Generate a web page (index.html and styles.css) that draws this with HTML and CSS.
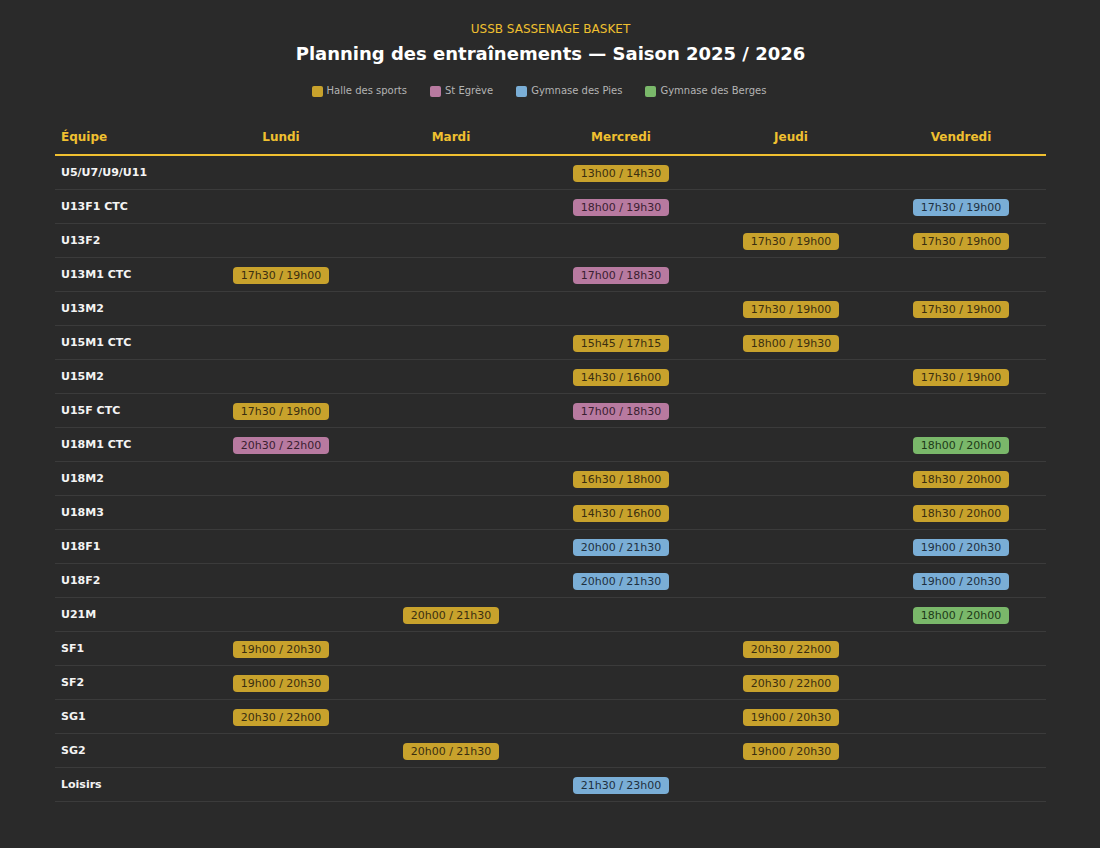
FILE: index.html
```html
<!DOCTYPE html>
<html lang="fr">
<head>
<meta charset="utf-8">
<title>Planning</title>
<link rel="stylesheet" href="styles.css">
</head>
<body>
<div class="page">
  <header class="head">
    <div class="club">USSB SASSENAGE BASKET</div>
    <h1 class="title">Planning des entraînements — Saison 2025 / 2026</h1>
    <div class="legend">
      <span class="leg"><i class="sw gold"></i>Halle des sports</span>
      <span class="leg"><i class="sw pink"></i>St Egrève</span>
      <span class="leg"><i class="sw blue"></i>Gymnase des Pies</span>
      <span class="leg"><i class="sw green"></i>Gymnase des Berges</span>
    </div>
  </header>
  <table class="grid">
    <thead>
      <tr><th class="team">Équipe</th><th>Lundi</th><th>Mardi</th><th>Mercredi</th><th>Jeudi</th><th>Vendredi</th></tr>
    </thead>
    <tbody>
      <tr><td class="team">U5/U7/U9/U11</td><td></td><td></td><td><span class="b gold">13h00 / 14h30</span></td><td></td><td></td></tr>
      <tr><td class="team">U13F1 CTC</td><td></td><td></td><td><span class="b pink">18h00 / 19h30</span></td><td></td><td><span class="b blue">17h30 / 19h00</span></td></tr>
      <tr><td class="team">U13F2</td><td></td><td></td><td></td><td><span class="b gold">17h30 / 19h00</span></td><td><span class="b gold">17h30 / 19h00</span></td></tr>
      <tr><td class="team">U13M1 CTC</td><td><span class="b gold">17h30 / 19h00</span></td><td></td><td><span class="b pink">17h00 / 18h30</span></td><td></td><td></td></tr>
      <tr><td class="team">U13M2</td><td></td><td></td><td></td><td><span class="b gold">17h30 / 19h00</span></td><td><span class="b gold">17h30 / 19h00</span></td></tr>
      <tr><td class="team">U15M1 CTC</td><td></td><td></td><td><span class="b gold">15h45 / 17h15</span></td><td><span class="b gold">18h00 / 19h30</span></td><td></td></tr>
      <tr><td class="team">U15M2</td><td></td><td></td><td><span class="b gold">14h30 / 16h00</span></td><td></td><td><span class="b gold">17h30 / 19h00</span></td></tr>
      <tr><td class="team">U15F CTC</td><td><span class="b gold">17h30 / 19h00</span></td><td></td><td><span class="b pink">17h00 / 18h30</span></td><td></td><td></td></tr>
      <tr><td class="team">U18M1 CTC</td><td><span class="b pink">20h30 / 22h00</span></td><td></td><td></td><td></td><td><span class="b green">18h00 / 20h00</span></td></tr>
      <tr><td class="team">U18M2</td><td></td><td></td><td><span class="b gold">16h30 / 18h00</span></td><td></td><td><span class="b gold">18h30 / 20h00</span></td></tr>
      <tr><td class="team">U18M3</td><td></td><td></td><td><span class="b gold">14h30 / 16h00</span></td><td></td><td><span class="b gold">18h30 / 20h00</span></td></tr>
      <tr><td class="team">U18F1</td><td></td><td></td><td><span class="b blue">20h00 / 21h30</span></td><td></td><td><span class="b blue">19h00 / 20h30</span></td></tr>
      <tr><td class="team">U18F2</td><td></td><td></td><td><span class="b blue">20h00 / 21h30</span></td><td></td><td><span class="b blue">19h00 / 20h30</span></td></tr>
      <tr><td class="team">U21M</td><td></td><td><span class="b gold">20h00 / 21h30</span></td><td></td><td></td><td><span class="b green">18h00 / 20h00</span></td></tr>
      <tr><td class="team">SF1</td><td><span class="b gold">19h00 / 20h30</span></td><td></td><td></td><td><span class="b gold">20h30 / 22h00</span></td><td></td></tr>
      <tr><td class="team">SF2</td><td><span class="b gold">19h00 / 20h30</span></td><td></td><td></td><td><span class="b gold">20h30 / 22h00</span></td><td></td></tr>
      <tr><td class="team">SG1</td><td><span class="b gold">20h30 / 22h00</span></td><td></td><td></td><td><span class="b gold">19h00 / 20h30</span></td><td></td></tr>
      <tr><td class="team">SG2</td><td></td><td><span class="b gold">20h00 / 21h30</span></td><td></td><td><span class="b gold">19h00 / 20h30</span></td><td></td></tr>
      <tr><td class="team">Loisirs</td><td></td><td></td><td><span class="b blue">21h30 / 23h00</span></td><td></td><td></td></tr>
    </tbody>
  </table>
</div>
</body>
</html>
```
FILE: styles.css
```css
html, body {
  margin: 0;
  padding: 0;
  background: #2a2a2a;
}
body {
  font-family: "DejaVu Sans", sans-serif;
  color: #ffffff;
}
.page {
  padding: 21px 54px 40px 55px;
}
.head {
  text-align: center;
}
.club {
  color: #f0c030;
  font-size: 12px;
  line-height: 16px;
}
.title {
  margin: 4px 0 0 0;
  font-size: 18px;
  line-height: 26px;
  font-weight: bold;
  color: #ffffff;
}
.legend {
  display: flex;
  justify-content: center;
  margin-top: 17px;
  font-size: 10px;
  line-height: 14px;
  color: #b4b4b4;
}
.leg {
  display: inline-flex;
  align-items: center;
  gap: 4px;
  margin-right: 23px;
}
.sw {
  display: inline-block;
  width: 11px;
  height: 11px;
  border-radius: 2px;
}
.grid {
  width: 991px;
  margin-top: 22px;
  border-collapse: collapse;
  table-layout: fixed;
}
.grid th {
  color: #f0c030;
  font-size: 12px;
  font-weight: bold;
  height: 34px;
  padding: 0;
  text-align: center;
  border-bottom: 2px solid #f0c030;
  width: 170px;
}
.grid th.team {
  width: 135px;
  text-align: left;
  padding-left: 6px;
}
.grid td {
  height: 33px;
  padding: 0;
  text-align: center;
  vertical-align: middle;
  border-bottom: 1px solid #3b3b3b;
}
.grid td.team {
  text-align: left;
  padding-left: 6px;
  font-size: 11px;
  font-weight: bold;
  color: #f4f4f4;
}
.b {
  display: inline-block;
  vertical-align: 1px;
  font-size: 11px;
  line-height: 17px;
  padding: 0 8px;
  border-radius: 4px;
  color: #3a2e10;
}
.gold { background: #c8a22c; }
.pink { background: #b87aa0; color: #3a2030; }
.blue { background: #7aaed6; color: #1e3040; }
.green { background: #7ab86a; color: #1e3a18; }
```
